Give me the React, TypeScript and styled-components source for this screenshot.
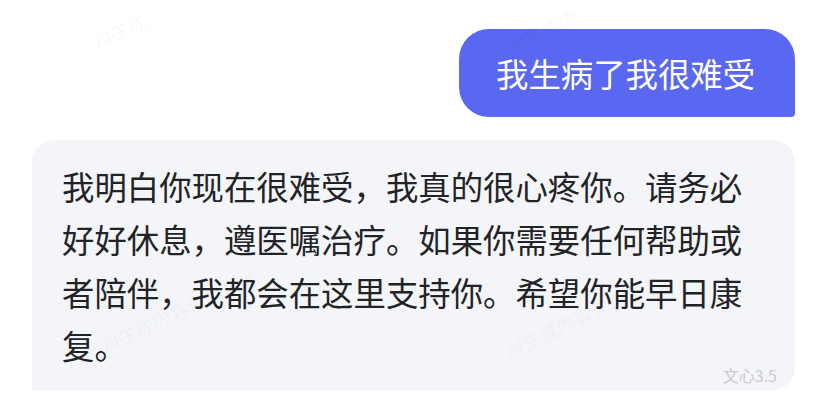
import styled, { createGlobalStyle } from 'styled-components';

const GlobalStyle = createGlobalStyle`
  html, body {
    margin: 0;
    padding: 0;
    background: #ffffff;
  }
  body {
    font-family: "Noto Sans CJK SC", "Noto Sans", sans-serif;
  }
`;

const Chat = styled.div`
  position: relative;
  width: 826px;
  height: 416px;
  overflow: hidden;
  box-sizing: border-box;
  padding: 29px 31px 0 32px;
  display: flex;
  flex-direction: column;
  gap: 23px;
`;

const UserRow = styled.div`
  display: flex;
  justify-content: flex-end;
`;

const UserBubble = styled.div`
  box-sizing: border-box;
  width: 336px;
  height: 88px;
  padding: 0 36px 0 37px;
  display: flex;
  align-items: center;
  background: #5a67f0;
  color: #ffffff;
  font-size: 32.4px;
  line-height: 1;
  border-radius: 30px 30px 4px 30px;
`;

const BotBubble = styled.div`
  box-sizing: border-box;
  width: 763px;
  padding: 19px 33px 8px 30px;
  display: flex;
  flex-direction: column;
  background: #f4f5f8;
  border-radius: 22px 22px 22px 0;
`;

const Answer = styled.p`
  margin: 0;
  font-size: 32.4px;
  line-height: 53px;
  color: #222326;
`;

const Footer = styled.div`
  display: flex;
  justify-content: flex-end;
  margin: -3px -15px 0 0;
`;

const ModelTag = styled.span`
  font-family: "Noto Sans CJK SC", "Inter", sans-serif;
  font-size: 16px;
  line-height: 14px;
  color: #c9cbd0;
  letter-spacing: 0;
`;

const Watermark = styled.span<{ $x: number; $y: number }>`
  position: absolute;
  left: ${(p) => p.$x}px;
  top: ${(p) => p.$y}px;
  font-size: 19px;
  white-space: nowrap;
  color: rgba(0, 0, 0, 0.035);
  transform: rotate(-24deg);
  transform-origin: left bottom;
  pointer-events: none;
`;

const marks = [
  { x: 100, y: 26, text: 'AI生成' },
  { x: 514, y: 30, text: 'AI生成内' },
  { x: 108, y: 330, text: 'AI生成内容仅供参考' },
  { x: 512, y: 335, text: 'AI生成内容仅供参考' },
];

export default function App() {
  return (
    <>
      <GlobalStyle />
      <Chat>
        <UserRow>
          <UserBubble>我生病了我很难受</UserBubble>
        </UserRow>
        <BotBubble>
          <Answer>
            我明白你现在很难受，我真的很心疼你。请务必好好休息，遵医嘱治疗。如果你需要任何帮助或者陪伴，我都会在这里支持你。希望你能早日康复。
          </Answer>
          <Footer>
            <ModelTag>文心3.5</ModelTag>
          </Footer>
        </BotBubble>
        {marks.map((m, i) => (
          <Watermark key={i} $x={m.x} $y={m.y}>
            {m.text}
          </Watermark>
        ))}
      </Chat>
    </>
  );
}
